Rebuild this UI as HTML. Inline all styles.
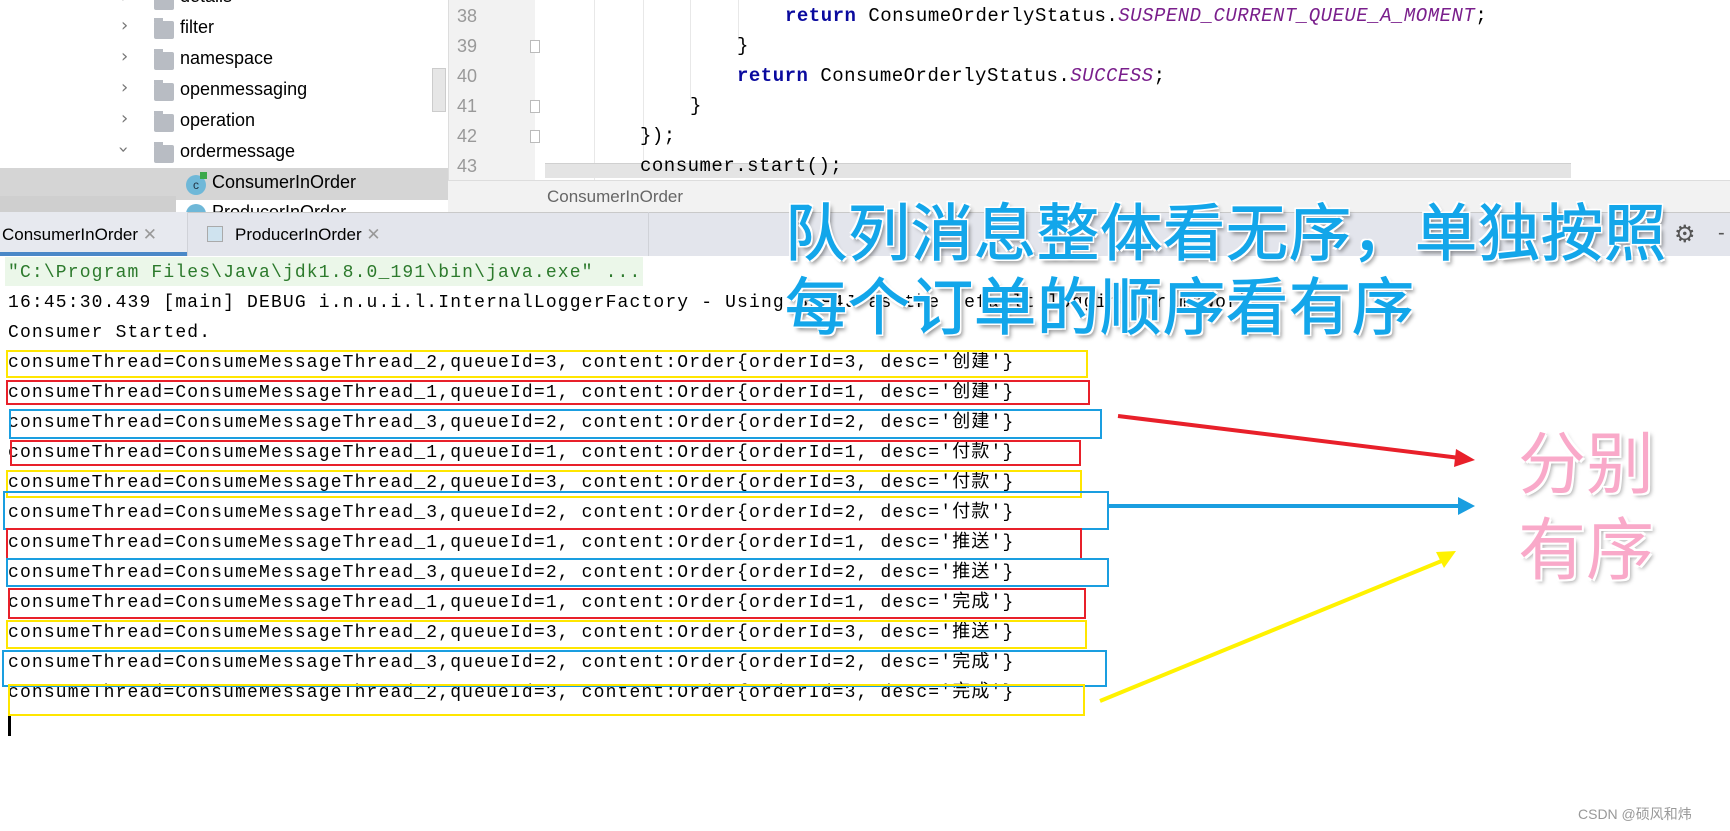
<!DOCTYPE html>
<html><head><meta charset="utf-8"><style>
*{margin:0;padding:0;box-sizing:border-box}
body{width:1730px;height:831px;position:relative;overflow:hidden;background:#fff;font-family:"Liberation Sans","Noto Sans CJK SC",sans-serif}
.a{position:absolute;white-space:pre}
.mono{font-family:"Liberation Mono","Noto Sans CJK SC",monospace}
.tree{font-size:18px;color:#000}
.chev{font-size:18px;color:#777;font-family:"DejaVu Sans",sans-serif}
.fold{position:absolute;width:20px;height:18px;background:#b8bcc3;border-radius:2px}
.fold:before{content:"";position:absolute;left:0;top:-3px;width:9px;height:4px;background:#b8bcc3}
.code{font-size:19px;letter-spacing:0.5px;color:#000}
.kw{color:#0a0a9e;font-weight:bold}
.st{color:#7a1f8c;font-style:italic}
.ln{font-size:18px;color:#999}
.con{font-size:18px;letter-spacing:1.15px;color:#000;line-height:30px}
.box{position:absolute;border:2px solid}
.big{font-weight:normal;color:#13a6ea;font-size:62px;letter-spacing:1px;text-shadow:-2px -2px 0 #fff,2px -2px 0 #fff,-2px 2px 0 #fff,2px 2px 0 #fff,3px 4px 4px rgba(0,0,0,.45);-webkit-text-stroke:1px #13a6ea}
.pink{color:#f9a9c9;font-size:68px;text-shadow:-2px -2px 0 #fff,2px -2px 0 #fff,-2px 2px 0 #fff,2px 2px 0 #fff,3px 3px 4px rgba(0,0,0,.35)}
</style></head><body>
<div class="a" style="left:0;top:0;width:448px;height:212px;background:#fff"></div>
<div class="a" style="left:0;top:168px;width:448px;height:32px;background:#d5d5d5"></div>
<div class="a" style="left:0;top:196px;width:176px;height:16px;background:#cfcfcf"></div>
<div class="a" style="left:432px;top:68px;width:14px;height:44px;background:#e6e6e6;border:1px solid #ccc"></div>
<div class="a chev" style="left:121px;top:-14px">›</div><div class="fold" style="left:154px;top:-8px"></div><div class="a tree" style="left:180px;top:-14px">details</div>
<div class="a chev" style="left:121px;top:15px">›</div><div class="fold" style="left:154px;top:21px"></div><div class="a tree" style="left:180px;top:17px">filter</div>
<div class="a chev" style="left:121px;top:46px">›</div><div class="fold" style="left:154px;top:52px"></div><div class="a tree" style="left:180px;top:48px">namespace</div>
<div class="a chev" style="left:121px;top:77px">›</div><div class="fold" style="left:154px;top:83px"></div><div class="a tree" style="left:180px;top:79px">openmessaging</div>
<div class="a chev" style="left:121px;top:108px">›</div><div class="fold" style="left:154px;top:114px"></div><div class="a tree" style="left:180px;top:110px">operation</div>
<div class="a chev" style="left:120px;top:139px;transform:rotate(90deg)">›</div><div class="fold" style="left:154px;top:145px"></div><div class="a tree" style="left:180px;top:141px">ordermessage</div>
<div class="a" style="left:186px;top:175px;width:20px;height:20px;border-radius:50%;background:#6fb8d8;color:#234;font-size:12px;text-align:center;line-height:20px">c</div>
<div class="a" style="left:200px;top:172px;width:7px;height:7px;background:#3ca84a"></div>
<div class="a tree" style="left:212px;top:172px">ConsumerInOrder</div>
<div class="a" style="left:186px;top:204px;width:20px;height:20px;border-radius:50%;background:#6fb8d8"></div>
<div class="a tree" style="left:212px;top:202px">ProducerInOrder</div>
<div class="a" style="left:448px;top:0;width:1282px;height:180px;background:#fff;border-left:1px solid #ddd"></div>
<div class="a" style="left:449px;top:0;width:86px;height:180px;background:#f2f2f2"></div>
<div class="a" style="left:594px;top:0;width:1px;height:180px;background:#e8e8e8"></div>
<div class="a" style="left:643px;top:0;width:1px;height:160px;background:#e8e8e8"></div>
<div class="a" style="left:690px;top:0;width:1px;height:100px;background:#e8e8e8"></div>
<div class="a" style="left:738px;top:0;width:1px;height:40px;background:#e8e8e8"></div>
<div class="a" style="left:545px;top:163px;width:1026px;height:15px;background:#e4e4e4;border-top:1px solid #d0d0d0"></div>
<div class="a ln" style="left:457px;top:6px">38</div>
<div class="a ln" style="left:457px;top:36px">39</div>
<div class="a ln" style="left:457px;top:66px">40</div>
<div class="a ln" style="left:457px;top:96px">41</div>
<div class="a ln" style="left:457px;top:126px">42</div>
<div class="a ln" style="left:457px;top:156px">43</div>
<div class="a" style="left:530px;top:40px;width:10px;height:13px;border:1px solid #bbb;background:#fff"></div>
<div class="a" style="left:530px;top:100px;width:10px;height:13px;border:1px solid #bbb;background:#fff"></div>
<div class="a" style="left:530px;top:130px;width:10px;height:13px;border:1px solid #bbb;background:#fff"></div>
<div class="a mono code" style="left:785px;top:5px"><span class="kw">return</span> ConsumeOrderlyStatus.<span class="st">SUSPEND_CURRENT_QUEUE_A_MOMENT</span>;</div>
<div class="a mono code" style="left:737px;top:35px">}</div>
<div class="a mono code" style="left:737px;top:65px"><span class="kw">return</span> ConsumeOrderlyStatus.<span class="st">SUCCESS</span>;</div>
<div class="a mono code" style="left:690px;top:95px">}</div>
<div class="a mono code" style="left:640px;top:125px">});</div>
<div class="a mono code" style="left:640px;top:155px">consumer.start();</div>
<div class="a" style="left:448px;top:180px;width:1282px;height:32px;background:#f2f2f2;border-top:1px solid #ddd"></div>
<div class="a" style="left:547px;top:187px;font-size:17px;color:#666">ConsumerInOrder</div>
<div class="a" style="left:0;top:212px;width:1730px;height:44px;background:#e3e5ec;border-top:1px solid #c9c9c9"></div>
<div class="a" style="left:0;top:212px;width:187px;height:44px;background:#e7e9ef"></div>
<div class="a" style="left:0;top:252px;width:187px;height:4px;background:#4a88c7"></div>
<div class="a" style="left:187px;top:212px;width:1px;height:44px;background:#d0d2d8"></div>
<div class="a" style="left:648px;top:212px;width:1px;height:44px;background:#d0d2d8"></div>
<div class="a" style="left:2px;top:225px;font-size:17px;color:#000">ConsumerInOrder <span style="color:#999">✕</span></div>
<div class="a" style="left:207px;top:226px;width:16px;height:16px;border:1px solid #aaa;background:#cfe3ef"></div>
<div class="a" style="left:235px;top:225px;font-size:17px;color:#000">ProducerInOrder <span style="color:#999">✕</span></div>
<div class="a" style="left:1674px;top:220px;font-size:24px;color:#555;font-family:'DejaVu Sans'">⚙</div>
<div class="a" style="left:1718px;top:222px;font-size:20px;color:#555">-</div>
<div class="a" style="left:5px;top:257px;width:638px;height:29px;background:#ebf7e9"></div>
<div class="a mono con" style="left:8px;top:258px;color:#2c7a2c">"C:\Program Files\Java\jdk1.8.0_191\bin\java.exe" ...</div>
<div class="a mono con" style="left:8px;top:288px">16:45:30.439 [main] DEBUG i.n.u.i.l.InternalLoggerFactory - Using SLF4J as the default logging framework</div>
<div class="a mono con" style="left:8px;top:318px">Consumer Started.</div>
<div class="a mono con" style="left:8px;top:348px">consumeThread=ConsumeMessageThread_2,queueId=3, content:Order{orderId=3, desc='创建'}
consumeThread=ConsumeMessageThread_1,queueId=1, content:Order{orderId=1, desc='创建'}
consumeThread=ConsumeMessageThread_3,queueId=2, content:Order{orderId=2, desc='创建'}
consumeThread=ConsumeMessageThread_1,queueId=1, content:Order{orderId=1, desc='付款'}
consumeThread=ConsumeMessageThread_2,queueId=3, content:Order{orderId=3, desc='付款'}
consumeThread=ConsumeMessageThread_3,queueId=2, content:Order{orderId=2, desc='付款'}
consumeThread=ConsumeMessageThread_1,queueId=1, content:Order{orderId=1, desc='推送'}
consumeThread=ConsumeMessageThread_3,queueId=2, content:Order{orderId=2, desc='推送'}
consumeThread=ConsumeMessageThread_1,queueId=1, content:Order{orderId=1, desc='完成'}
consumeThread=ConsumeMessageThread_2,queueId=3, content:Order{orderId=3, desc='推送'}
consumeThread=ConsumeMessageThread_3,queueId=2, content:Order{orderId=2, desc='完成'}
consumeThread=ConsumeMessageThread_2,queueId=3, content:Order{orderId=3, desc='完成'}</div>
<div class="a" style="left:8px;top:716px;width:3px;height:20px;background:#000"></div>
<div class="box" style="left:6px;top:350px;width:1082px;height:28px;border-color:#ffe600"></div>
<div class="box" style="left:6px;top:380px;width:1084px;height:25px;border-color:#e8202a"></div>
<div class="box" style="left:9px;top:409px;width:1093px;height:30px;border-color:#1a9ee0"></div>
<div class="box" style="left:10px;top:440px;width:1071px;height:26px;border-color:#e8202a"></div>
<div class="box" style="left:6px;top:470px;width:1076px;height:28px;border-color:#ffe600"></div>
<div class="box" style="left:3px;top:491px;width:1106px;height:39px;border-color:#1a9ee0"></div>
<div class="box" style="left:6px;top:528px;width:1076px;height:32px;border-color:#e8202a"></div>
<div class="box" style="left:6px;top:558px;width:1103px;height:29px;border-color:#1a9ee0"></div>
<div class="box" style="left:8px;top:588px;width:1078px;height:31px;border-color:#e8202a"></div>
<div class="box" style="left:6px;top:620px;width:1081px;height:29px;border-color:#ffe600"></div>
<div class="box" style="left:2px;top:650px;width:1105px;height:37px;border-color:#1a9ee0"></div>
<div class="box" style="left:8px;top:684px;width:1077px;height:32px;border-color:#ffe600"></div>
<svg class="a" style="left:0;top:0" width="1730" height="831">
<line x1="1118" y1="416" x2="1460" y2="458" stroke="#e8202a" stroke-width="4"/>
<polygon points="1475,460 1456,449 1454,467" fill="#e8202a"/>
<line x1="1107" y1="506" x2="1460" y2="506" stroke="#1a9ee0" stroke-width="4"/>
<polygon points="1475,506 1458,497 1458,515" fill="#1a9ee0"/>
<line x1="1100" y1="701" x2="1444" y2="560" stroke="#fff200" stroke-width="4"/>
<polygon points="1456,551 1436,552 1444,568" fill="#fff200"/>
</svg>
<div class="a big" style="left:785px;top:198px;line-height:74px">队列消息整体看无序，单独按照
每个订单的顺序看有序</div>
<div class="a pink" style="left:1518px;top:422px;line-height:86px">分别
有序</div>
<div class="a" style="left:1578px;top:804px;font-size:14px;color:#999">CSDN @硕风和炜</div>
</body></html>
